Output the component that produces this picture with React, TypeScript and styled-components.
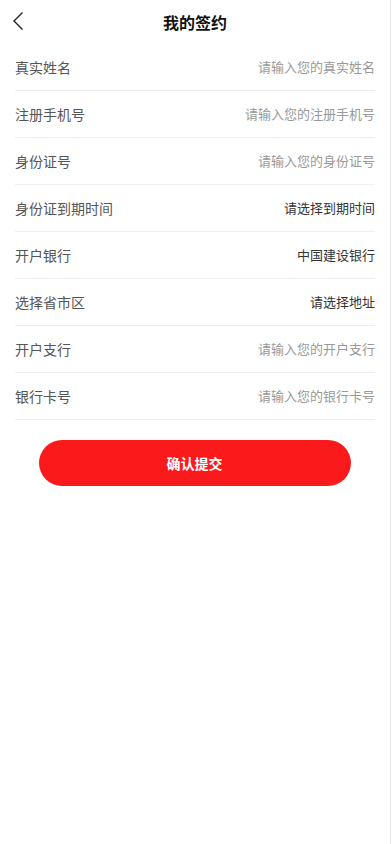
import React from "react";
import styled, { createGlobalStyle } from "styled-components";

const Global = createGlobalStyle`
  html, body { margin: 0; padding: 0; background: #fff; }
  body { font-family: "Noto Sans CJK SC", "Noto Sans", sans-serif; }
  * { box-sizing: border-box; }
`;

const Page = styled.div`
  width: 391px;
  min-height: 844px;
  border-right: 1px solid #e6e6e6;
  background: #fff;
`;

const Header = styled.div`
  height: 44px;
  display: flex;
  align-items: center;
  justify-content: center;
  position: relative;
`;

const Back = styled.button`
  position: absolute;
  left: 8px;
  top: 10px;
  width: 20px;
  height: 22px;
  padding: 0;
  border: none;
  background: none;
  display: flex;
  align-items: center;
  justify-content: center;
`;

const Title = styled.h1`
  margin: 0;
  font-size: 16px;
  font-weight: 700;
  color: #111;
  line-height: 1;
`;

const Form = styled.div`
  padding: 0 15px 0 15px;
`;

const Row = styled.div`
  height: 47px;
  display: flex;
  align-items: center;
  justify-content: space-between;
  border-bottom: 1px solid #efefef;
  padding-bottom: 1px;
`;

const Label = styled.span`
  font-size: 14px;
  color: #555;
`;

const Value = styled.span<{ $filled?: boolean }>`
  font-size: 13px;
  color: ${(p) => (p.$filled ? "#333" : "#999")};
`;

const Footer = styled.div`
  display: flex;
  justify-content: center;
  padding-top: 20px;
`;

const Submit = styled.button`
  width: 312px;
  height: 46px;
  border: none;
  border-radius: 23px;
  background: #fa1a1c;
  color: #fff;
  font-family: inherit;
  font-size: 14px;
  font-weight: 700;
  margin-left: -1px;
`;

const rows: { label: string; value: string; filled?: boolean }[] = [
  { label: "真实姓名", value: "请输入您的真实姓名" },
  { label: "注册手机号", value: "请输入您的注册手机号" },
  { label: "身份证号", value: "请输入您的身份证号" },
  { label: "身份证到期时间", value: "请选择到期时间", filled: true },
  { label: "开户银行", value: "中国建设银行", filled: true },
  { label: "选择省市区", value: "请选择地址", filled: true },
  { label: "开户支行", value: "请输入您的开户支行" },
  { label: "银行卡号", value: "请输入您的银行卡号" },
];

export default function App() {
  return (
    <Page>
      <Global />
      <Header>
        <Back aria-label="返回">
          <svg width="12" height="20" viewBox="0 0 12 20" fill="none">
            <path d="M10.5 1.5L2 10L10.5 18.5" stroke="#222" strokeWidth="1.4" />
          </svg>
        </Back>
        <Title>我的签约</Title>
      </Header>
      <Form>
        {rows.map((r) => (
          <Row key={r.label}>
            <Label>{r.label}</Label>
            <Value $filled={r.filled}>{r.value}</Value>
          </Row>
        ))}
      </Form>
      <Footer>
        <Submit>确认提交</Submit>
      </Footer>
    </Page>
  );
}
